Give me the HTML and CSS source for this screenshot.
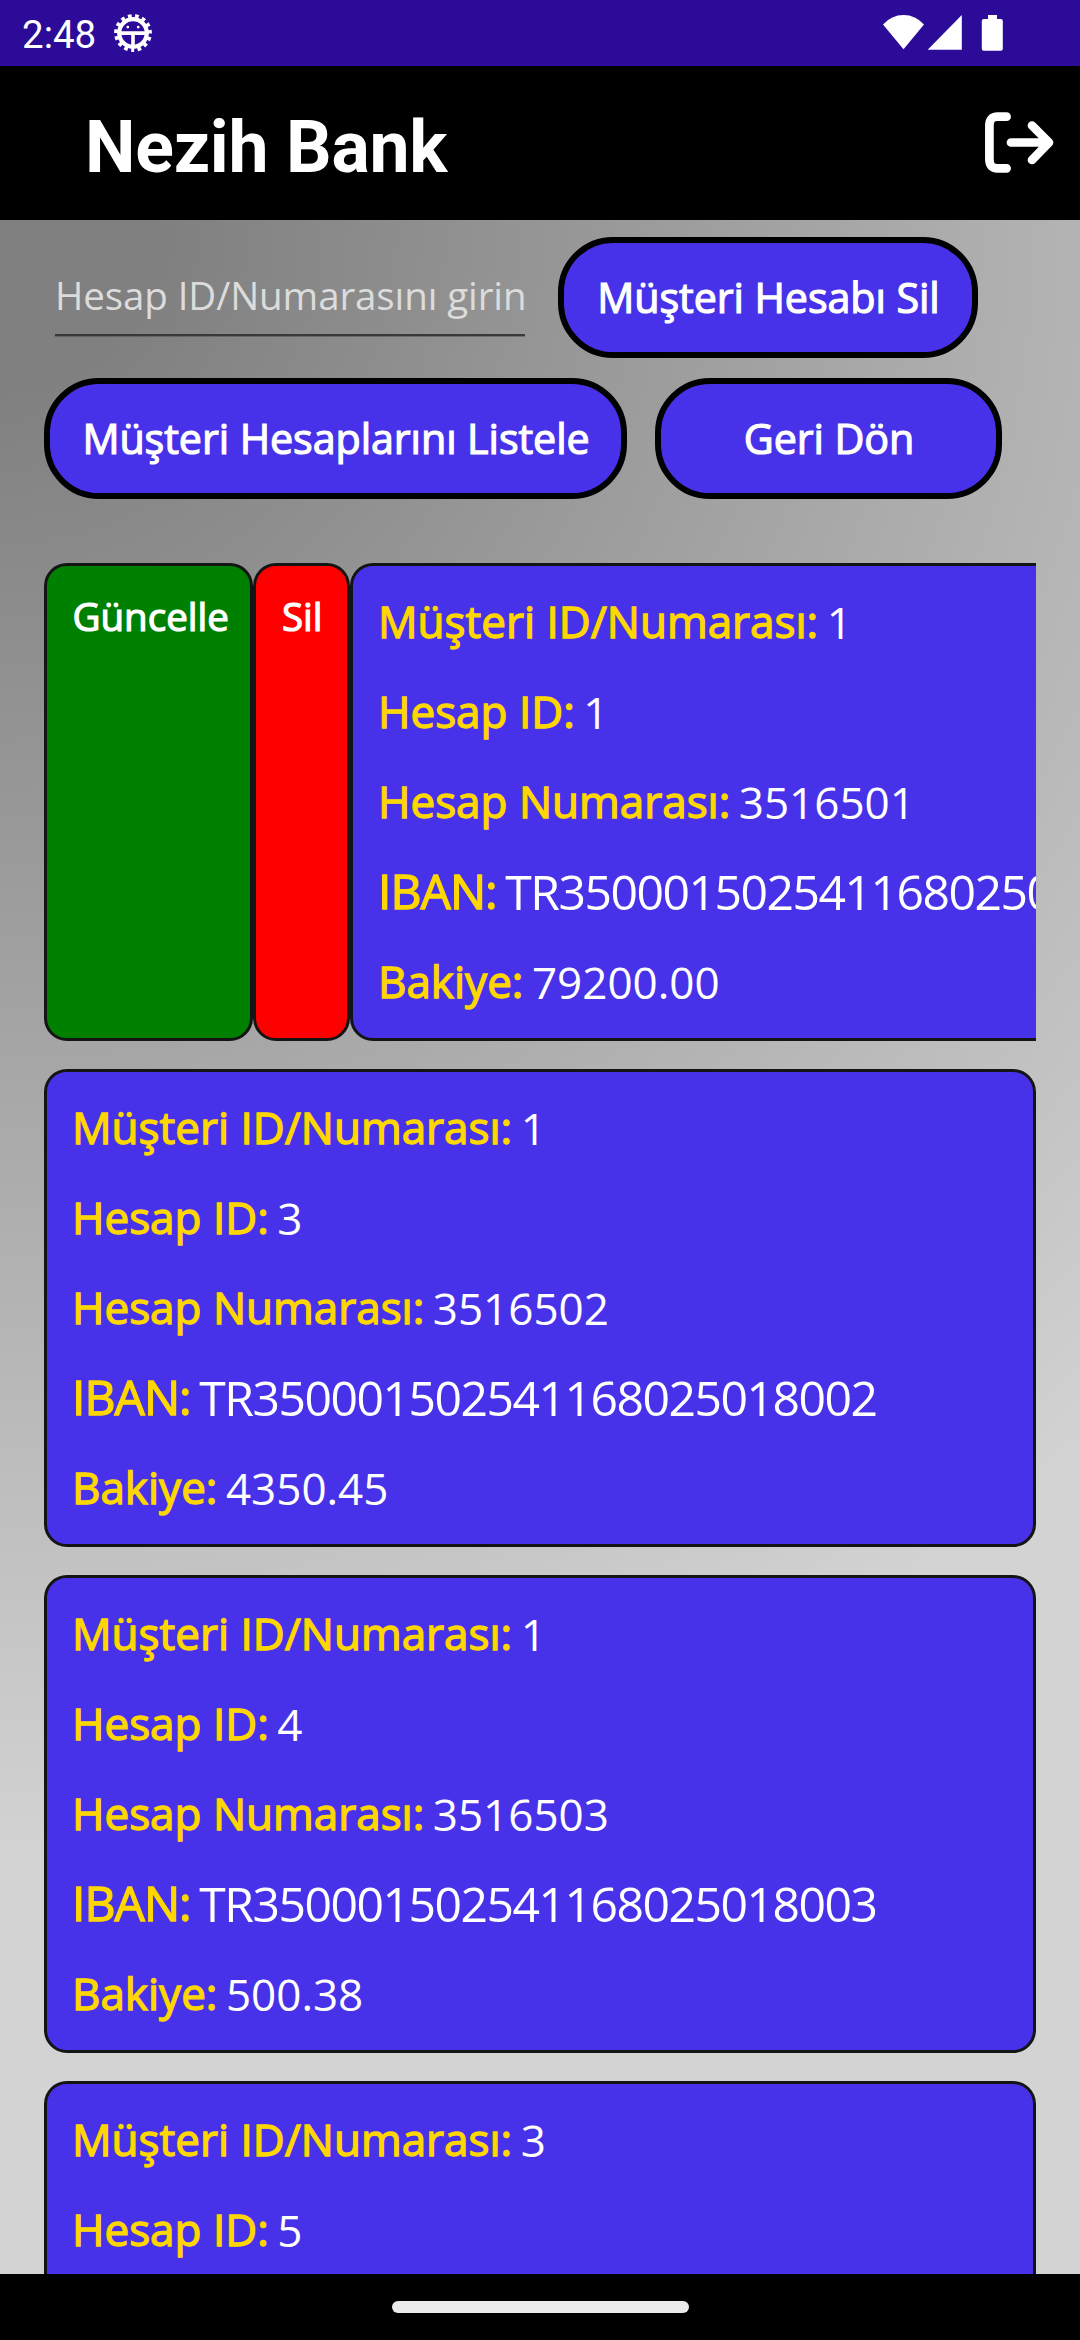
FILE: index.html
```
<!DOCTYPE html>
<html lang="tr">
<head>
<meta charset="utf-8">
<title>Nezih Bank</title>
<link rel="stylesheet" href="styles.css">
</head>
<body>
<div class="status-bar">
  <span class="clock">2:48</span>
  <svg class="status-gear" viewBox="-20 -20 40 40" aria-hidden="true">
    <circle r="16.6" fill="none" stroke="#fff" stroke-width="4.6" stroke-dasharray="3.6 3.352" stroke-dashoffset="1.8" stroke-linecap="butt" transform="rotate(90)"/>
    <circle r="13.8" fill="none" stroke="#fff" stroke-width="4.2"/>
    <path d="M-13 0.1H13M0 0V14" fill="none" stroke="#fff" stroke-width="3.6"/>
    <circle cx="-5.2" cy="-5.9" r="1.4" fill="#fff"/>
    <circle cx="5.2" cy="-5.9" r="1.4" fill="#fff"/>
  </svg>
  <svg class="status-icons" viewBox="0 0 122 38" aria-hidden="true">
    <path d="M0 10.5Q8.500 1 20.500 1T41 10.500L20.500 35.300Z" fill="#fff"/>
    <path d="M44.700 35.700L78.800 1V35.700Z" fill="#fff"/>
    <path d="M105 1h9v4h3.800a2 2 0 0 1 2 2v27.700a2 2 0 0 1-2 2h-17a2 2 0 0 1-2-2V7a2 2 0 0 1 2-2H105Z" fill="#fff"/>
  </svg>
</div>
<header class="app-bar">
  <h1 class="app-title">Nezih Bank</h1>
  <svg class="logout" viewBox="0 0 70 62" fill="none" stroke="#fff" stroke-width="8.700" stroke-linecap="round" stroke-linejoin="round" aria-hidden="true">
    <path d="M21.600 4.700H12.500Q4.400 4.700 4.400 13.700V47.300Q4.400 56.300 12.500 56.300H21.600M26 30.500H63M47 13.500L64 30.500L47 48"/>
  </svg>
</header>
<main class="content">
  <div class="search-row">
    <div class="entry">Hesap ID/Numarasını girin</div>
    <button class="button delete-button">Müşteri Hesabı Sil</button>
  </div>
  <div class="action-row">
    <button class="button list-button">Müşteri Hesaplarını Listele</button>
    <button class="button back-button">Geri Dön</button>
  </div>
  <div class="account-list">
    <div class="swipe-row">
      <div class="swipe update">Güncelle</div>
      <div class="swipe remove">Sil</div>
      <div class="card">
        <p><b>Müşteri ID/Numarası:</b><span>1</span></p>
        <p><b>Hesap ID:</b><span>1</span></p>
        <p><b>Hesap Numarası:</b><span>3516501</span></p>
        <p class="iban"><b>IBAN:</b><span>TR350001502541168025018001</span></p>
        <p><b>Bakiye:</b><span>79200.00</span></p>
      </div>
    </div>
    <div class="card">
      <p><b>Müşteri ID/Numarası:</b><span>1</span></p>
      <p><b>Hesap ID:</b><span>3</span></p>
      <p><b>Hesap Numarası:</b><span>3516502</span></p>
      <p class="iban"><b>IBAN:</b><span>TR350001502541168025018002</span></p>
      <p><b>Bakiye:</b><span>4350.45</span></p>
    </div>
    <div class="card">
      <p><b>Müşteri ID/Numarası:</b><span>1</span></p>
      <p><b>Hesap ID:</b><span>4</span></p>
      <p><b>Hesap Numarası:</b><span>3516503</span></p>
      <p class="iban"><b>IBAN:</b><span>TR350001502541168025018003</span></p>
      <p><b>Bakiye:</b><span>500.38</span></p>
    </div>
    <div class="card">
      <p><b>Müşteri ID/Numarası:</b><span>3</span></p>
      <p><b>Hesap ID:</b><span>5</span></p>
    </div>
  </div>
</main>
<div class="nav-bar"><div class="home-handle"></div></div>
</body>
</html>
```
FILE: styles.css
```
* { box-sizing: border-box; }

body {
  margin: 0;
  width: 1080px;
  height: 2340px;
  display: flex;
  flex-direction: column;
  overflow: hidden;
  background: #000;
  color: #fff;
  font-family: "Open Sans", sans-serif;
}

.status-bar {
  flex: none;
  height: 66px;
  display: flex;
  align-items: center;
  padding: 0 75px 0 22px;
  background: #2c0b98;
}

.clock {
  font: 38.5px/66px Roboto, sans-serif;
  padding-top: 3px;
}

.status-gear { width: 40px; height: 40px; margin-left: 17px; }
.status-icons { width: 122px; height: 38px; margin-left: auto; }

.app-bar {
  flex: none;
  height: 154px;
  display: flex;
  align-items: center;
  justify-content: space-between;
  padding: 0 25px 0 85px;
}

.app-title {
  margin: 0;
  font: bold 71.500px/84px Roboto, sans-serif;
  letter-spacing: -0.200px;
  padding-top: 9px;
}

.logout { width: 70px; height: 62px; }

.content {
  flex: none;
  height: 2054px;
  padding: 17px 44px 0;
  overflow: hidden;
  background: radial-gradient(circle 1643px at 0 0, #808080 10%, #d3d3d3 100%);
}

.search-row,
.action-row {
  display: flex;
  height: 121px;
}

.action-row { margin-top: 20px; gap: 28px; }

.entry {
  width: 470px;
  height: 99px;
  margin-left: 11px;
  padding-top: 32px;
  border-bottom: 2px solid #393939;
  box-shadow: 0 1px 0 rgba(57, 57, 57, 0.400);
  color: #dcdcdc;
  font-size: 38.500px;
  line-height: 52px;
  letter-spacing: -0.100px;
  white-space: nowrap;
}

.button {
  height: 121px;
  padding: 0 0 2px 1px;
  border: 6px solid #000;
  border-radius: 55px;
  background: #4832e9;
  color: #fff;
  font: 41.250px/56px "Open Sans", sans-serif;
  letter-spacing: -0.080px;
  -webkit-text-stroke: 1.200px #fff;
  white-space: nowrap;
}

.delete-button { width: 420px; margin-left: 33px; }
.list-button { width: 583px; }
.back-button { width: 347px; }

.account-list {
  display: flex;
  flex-direction: column;
  gap: 28px;
  margin-top: 64px;
}

.swipe-row { display: flex; overflow: hidden; }

.swipe,
.card {
  flex: none;
  height: 478px;
  border: 3px solid #141414;
  border-radius: 23px;
}

.swipe {
  padding: 24px 0 0 25.500px;
  font-size: 38.500px;
  line-height: 52px;
  -webkit-text-stroke: 1.200px #fff;
}

.update { width: 209px; background: #008000; }
.remove { width: 97px; padding-left: 26px; background: #f00; }

.card {
  width: 992px;
  padding: 11px 25px;
  background: #4832e9;
  font-size: 44px;
}

.card p {
  display: flex;
  gap: 8.500px;
  height: 90px;
  margin: 0;
  line-height: 90px;
  white-space: nowrap;
}

.card b {
  margin-top: -1px;
  color: #ffd700;
  font-weight: 400;
  -webkit-text-stroke: 1.300px #ffd700;
}

.card .iban { font-size: 48.100px; letter-spacing: -1.500px; }
.card .iban b { letter-spacing: -1.000px; }

.nav-bar {
  flex: none;
  height: 66px;
  display: flex;
  align-items: center;
  justify-content: center;
}

.home-handle {
  width: 297px;
  height: 12px;
  border-radius: 6px;
  background: #ebebeb;
}
```
